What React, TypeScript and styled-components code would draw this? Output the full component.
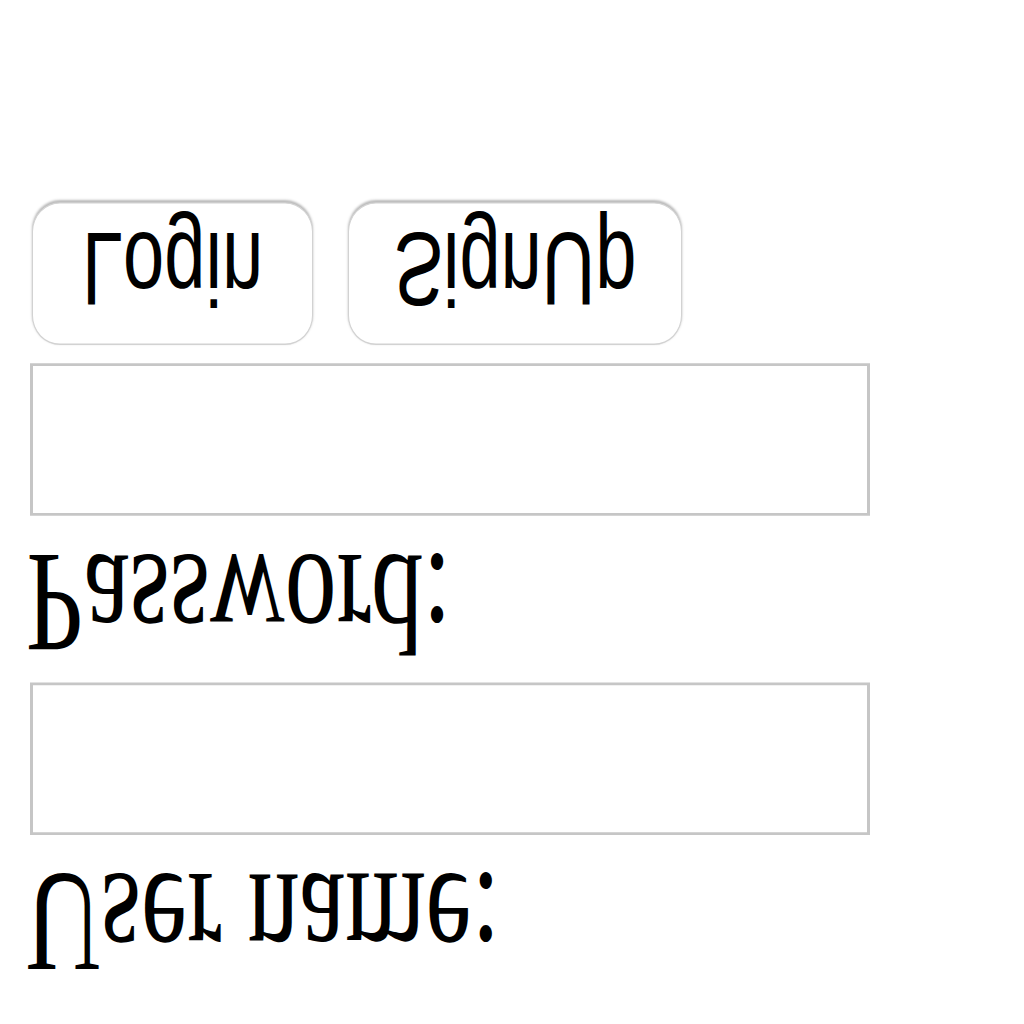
import React from "react";
import styled, { createGlobalStyle } from "styled-components";

const Global = createGlobalStyle`
  html, body {
    margin: 0;
    padding: 0;
    background: #ffffff;
  }
  body {
    font-family: "Liberation Serif", "Times New Roman", serif;
  }
`;

const Frame = styled.div`
  width: 1024px;
  height: 1024px;
  overflow: hidden;
  background: #ffffff;
`;

/* The whole form is shown mirrored top-to-bottom and stretched vertically. */
const Stage = styled.div`
  width: 1024px;
  height: 731px;
  box-sizing: border-box;
  padding: 15.5px 0 0 26px;
  transform-origin: 0 0;
  transform: translateY(1024px) scale(1, -1.4);
  display: flex;
  flex-direction: column;
  align-items: flex-start;
`;

const Label = styled.div`
  font-family: "Liberation Serif", "Times New Roman", serif;
  font-size: 103.5px;
  line-height: 113px;
  height: 113px;
  color: #000000;
  margin-bottom: 6.5px;
  white-space: nowrap;
`;

const Field = styled.input`
  display: block;
  box-sizing: border-box;
  width: 840px;
  height: 108.6px;
  margin: 0 0 0 4px;
  padding: 0;
  background: #ffffff;
  border-style: solid;
  border-color: #c6c6c6;
  border-width: 2px 3px;
  outline: none;
`;

const ButtonRow = styled.div`
  display: flex;
  gap: 35px;
  margin: 13.3px 0 0 6px;
`;

const Button = styled.button<{ $w: number }>`
  box-sizing: border-box;
  width: ${(p) => p.$w}px;
  height: 102px;
  padding: 14px 0 0;
  display: flex;
  justify-content: center;
  align-items: flex-start;
  font-family: "Liberation Sans", Arial, sans-serif;
  font-size: 74px;
  line-height: 80px;
  color: #000000;
  background: #ffffff;
  border: 1px solid #d2d2d2;
  border-radius: 28px / 21px;
  box-shadow: 0 1px 2px rgba(0, 0, 0, 0.28);
`;

export default function App() {
  return (
    <>
      <Global />
      <Frame>
        <Stage>
          <Label>User name:</Label>
          <Field type="text" />
          <Label>Password:</Label>
          <Field type="password" />
          <ButtonRow>
            <Button $w={281}>Login</Button>
            <Button $w={334}>SignUp</Button>
          </ButtonRow>
        </Stage>
      </Frame>
    </>
  );
}
